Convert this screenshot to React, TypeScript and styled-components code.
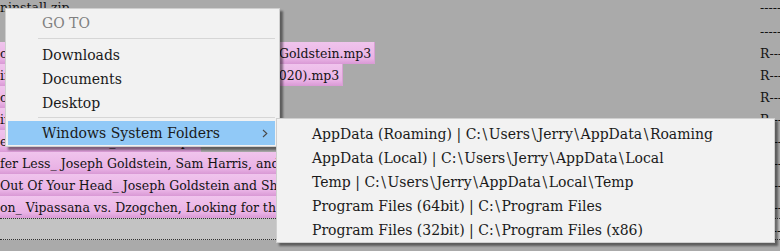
import styled, { createGlobalStyle } from 'styled-components';

const GlobalStyle = createGlobalStyle`
  html, body {
    margin: 0;
    padding: 0;
  }
  body {
    background: #aaaaaa;
    font-family: "DejaVu Serif", serif;
  }
`;

interface FileRow {
  name: string;
  attr: string;
  selected?: boolean;
  focused?: boolean;
}

const files: FileRow[] = [
  { name: 'ninstall.zip', attr: '-----' },
  { name: '', attr: '-----' },
  { name: 'on Kindness_ Sharon Salzberg, with Joseph Goldstein.mp3', attr: 'R----', selected: true },
  { name: 'ife is Practice Joseph Goldstein Interview (2020).mp3', attr: 'R----', selected: true },
  { name: 'osing Fear_ Tara Brach.mp3', attr: 'R----', selected: true },
  { name: 'in Practice_ Ajahn Chah.mp3', attr: 'R----', selected: true },
  { name: 'e Nature of Mind_ Guided.mp3', attr: 'R----', selected: true },
  { name: 'fer Less_ Joseph Goldstein, Sam Harris, and Dan Harris.mp3', attr: 'R----', selected: true },
  { name: 'Out Of Your Head_ Joseph Goldstein and Sharon Salzberg.mp3', attr: 'R----', selected: true },
  { name: 'on_ Vipassana vs. Dzogchen, Looking for the Looker.mp3', attr: 'R----', selected: true },
  { name: '', attr: '-----', focused: true },
  { name: '', attr: '-----' },
];

const goTo = ['Downloads', 'Documents', 'Desktop'];

const systemFolders = [
  { label: 'AppData (Roaming)', path: 'C:\\Users\\Jerry\\AppData\\Roaming' },
  { label: 'AppData (Local)', path: 'C:\\Users\\Jerry\\AppData\\Local' },
  { label: 'Temp', path: 'C:\\Users\\Jerry\\AppData\\Local\\Temp' },
  { label: 'Program Files (64bit)', path: 'C:\\Program Files' },
  { label: 'Program Files (32bit)', path: 'C:\\Program Files (x86)' },
];

// backslashes are drawn a bit wider in the original font
const PathText = ({ path }: { path: string }) => {
  const parts = path.split('\\');
  return (
    <>
      {parts.map((part, i) => (
        <span key={i}>
          {i > 0 && <Slash>\</Slash>}
          {part}
        </span>
      ))}
    </>
  );
};

const App = () => {
  return (
    <>
      <GlobalStyle />
      <Screen>
        <FileList>
          {files.map((f, i) => (
            <Row key={i} $focused={f.focused} $first={i === 0}>
              <NameCell>
                {f.name && <Name $selected={f.selected}>{f.name}</Name>}
              </NameCell>
              <AttrCell>{f.attr}</AttrCell>
            </Row>
          ))}
        </FileList>

        <ContextMenu>
          <MenuHeader>GO TO</MenuHeader>
          <Separator />
          {goTo.map((item) => (
            <MenuItem key={item}>{item}</MenuItem>
          ))}
          <Separator $gap />
          <MenuItem $active>
            <span>Windows System Folders</span>
            <Chevron width="6" height="9" viewBox="0 0 6 9">
              <polyline points="1,1 4.8,4.5 1,8" fill="none" stroke="#4a4a4a" strokeWidth="1.1" />
            </Chevron>
          </MenuItem>
        </ContextMenu>

        <SubMenu>
          {systemFolders.map((item) => (
            <SubItem key={item.label}>
              {item.label} | <PathText path={item.path} />
            </SubItem>
          ))}
        </SubMenu>
      </Screen>
    </>
  );
};

const Screen = styled.div`
  position: relative;
  width: 780px;
  height: 251px;
  overflow: hidden;
  background: #aaaaaa;
`;

const FileList = styled.div`
  display: flex;
  flex-direction: column;
  color: #141414;
  font-size: 12.5px;
`;

const Row = styled.div<{ $focused?: boolean; $first?: boolean }>`
  display: grid;
  grid-template-columns: 1fr 20px;
  box-sizing: border-box;
  height: ${(p) => (p.$first ? '20px' : '22px')};
  line-height: ${(p) => (p.$first ? '16px' : '20px')};
  padding-top: ${(p) => (p.$first ? '0' : '2px')};
  white-space: nowrap;
  background: ${(p) => (p.$focused ? '#c3c3c3' : 'transparent')};
  border-top: ${(p) => (p.$focused ? '1px dotted #333' : 'none')};
  border-bottom: ${(p) => (p.$focused ? '1px dotted #333' : 'none')};
`;

const NameCell = styled.div`
  overflow: hidden;
  margin-top: -2px;
`;

const Name = styled.span<{ $selected?: boolean }>`
  display: inline-block;
  height: 22px;
  box-sizing: border-box;
  padding: 2px 4px 0 0;
  background: ${(p) =>
    p.$selected ? 'linear-gradient(#f0c4ed 0%, #e9b2e5 75%, #d999d5 100%)' : 'transparent'};
  box-shadow: ${(p) => (p.$selected ? 'inset -1px 0 0 #d9a0d5' : 'none')};
`;

const AttrCell = styled.div`
  overflow: hidden;
`;

const Menu = styled.div`
  position: absolute;
  box-sizing: border-box;
  background: #f2f2f2;
  border: 1px solid #cfcfcf;
  box-shadow: 3px 3px 2px rgba(0, 0, 0, 0.45);
  color: #1a1a1a;
  font-size: 14px;
  white-space: nowrap;
`;

const ContextMenu = styled(Menu)`
  left: 5px;
  top: 8px;
  width: 275px;
  padding: 0 4px 1px 2px;
`;

const MenuHeader = styled.div`
  height: 28px;
  line-height: 28px;
  padding-left: 34px;
  color: #808080;
`;

const Separator = styled.div<{ $gap?: boolean }>`
  height: 1px;
  margin: ${(p) => (p.$gap ? '2px 0 3px 30px' : '1px 0 4px 30px')};
  background: #d6d6d6;
`;

const MenuItem = styled.div<{ $active?: boolean }>`
  display: flex;
  align-items: center;
  justify-content: space-between;
  height: 24px;
  line-height: 24px;
  padding: 0 7px 0 34px;
  background: ${(p) => (p.$active ? '#91c9f7' : 'transparent')};
`;

const Chevron = styled.svg`
  display: block;
`;

const SubMenu = styled(Menu)`
  left: 276px;
  top: 118px;
  width: 499px;
  padding: 3px 0 0;
`;

const SubItem = styled.div`
  height: 24px;
  line-height: 24px;
  padding-left: 35px;
`;

const Slash = styled.span`
  margin: 0 1.5px;
`;

export default App;
